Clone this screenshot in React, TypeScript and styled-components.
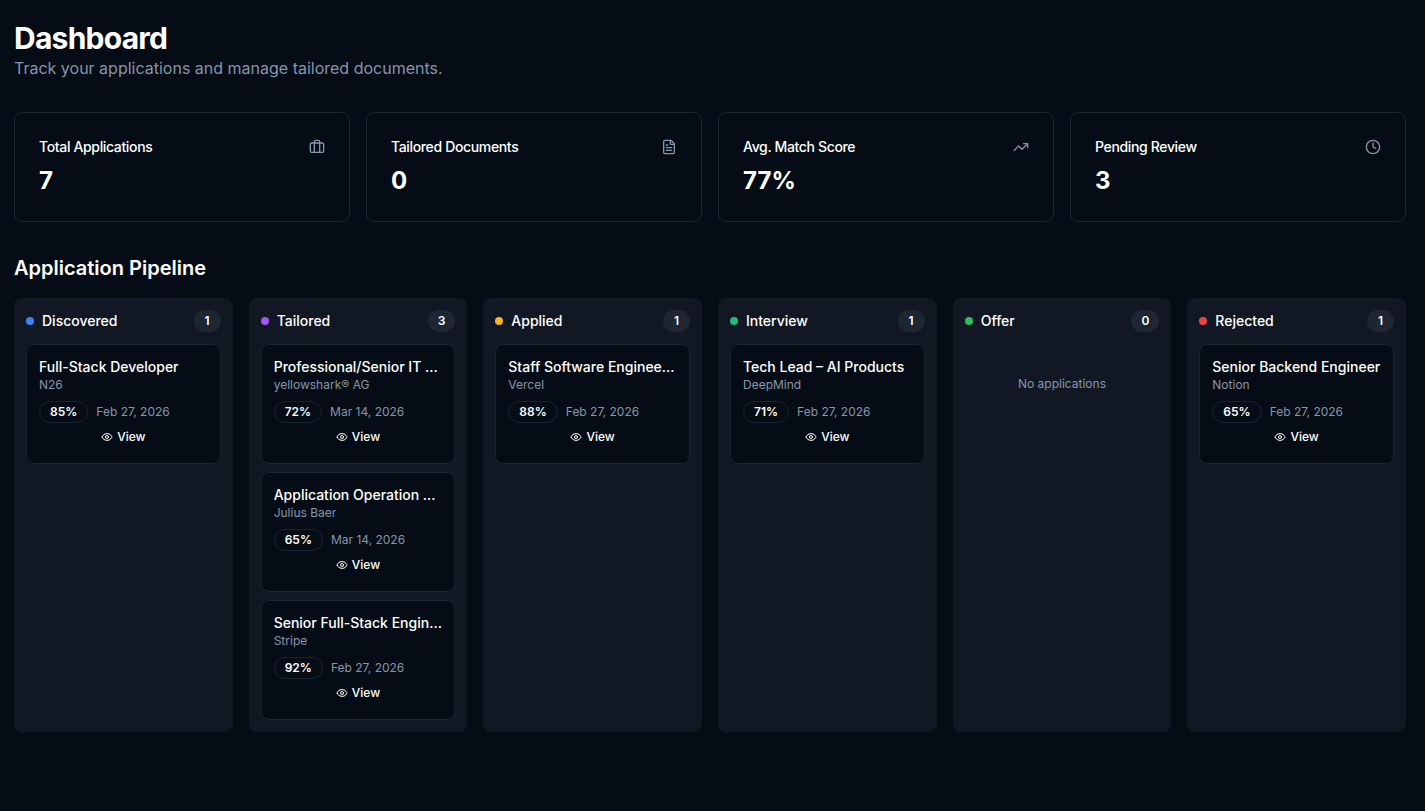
import React from "react";
import styled, { createGlobalStyle } from "styled-components";
import { Briefcase, FileText, TrendingUp, Clock, Eye } from "lucide-react";

const Global = createGlobalStyle`
  html, body { margin: 0; padding: 0; background: #050c15; }
  body { font-family: Inter, "Liberation Sans", sans-serif; color: #f8fafc; -webkit-font-smoothing: antialiased; }
  * { box-sizing: border-box; }
`;

const Page = styled.div`
  height: 811px;
  overflow: hidden;
  padding: 20px 19px 0 14px;
  background: #050c15;
`;
const Title = styled.h1`
  margin: 0;
  font-size: 30px;
  line-height: 36px;
  font-weight: 700;
  letter-spacing: -0.75px;
  color: #ffffff;
`;
const Subtitle = styled.p`
  margin: 0;
  font-size: 16px;
  line-height: 24px;
  color: #8795a9;
`;
const StatsGrid = styled.div`
  display: grid;
  grid-template-columns: repeat(4, minmax(0, 1fr));
  gap: 16px;
  margin-top: 32px;
`;
const StatCard = styled.div`
  height: 110px;
  border: 1px solid #1b2230;
  border-radius: 8px;
  padding: 24px;
`;
const StatTop = styled.div`
  display: flex;
  justify-content: space-between;
  align-items: center;
  height: 20px;
  margin-bottom: 8px;
  color: #8795a9;
`;
const StatLabel = styled.span`
  font-size: 14px;
  line-height: 20px;
  font-weight: 500;
  letter-spacing: -0.35px;
  color: #ffffff;
`;
const StatValue = styled.div`
  font-size: 24px;
  line-height: 32px;
  font-weight: 700;
  color: #ffffff;
`;
const SectionTitle = styled.h2`
  margin: 32px 0 16px;
  font-size: 20px;
  line-height: 28px;
  font-weight: 600;
  color: #ffffff;
`;
const Board = styled.div`
  display: grid;
  grid-template-columns: repeat(6, minmax(0, 1fr));
  gap: 16px;
`;
const Column = styled.div`
  height: 434px;
  min-width: 0;
  background: #111823;
  border-radius: 8px;
  padding: 12px;
`;
const ColumnHeader = styled.div`
  display: flex;
  align-items: center;
  height: 22px;
  margin-bottom: 12px;
`;
const Dot = styled.span<{ $color: string }>`
  width: 8px;
  height: 8px;
  border-radius: 50%;
  background: ${(p) => p.$color};
  margin-right: 8px;
`;
const ColumnName = styled.span`
  flex: 1;
  font-size: 14px;
  line-height: 20px;
  font-weight: 500;
  color: #ffffff;
`;
const Count = styled.span`
  min-width: 27px;
  height: 22px;
  padding: 0 10px;
  border-radius: 11px;
  background: #1e2533;
  font-size: 12px;
  line-height: 22px;
  font-weight: 600;
  text-align: center;
  color: #ffffff;
`;
const CardList = styled.div`
  display: flex;
  flex-direction: column;
  gap: 8px;
`;
const Card = styled.div`
  height: 120px;
  min-width: 0;
  background: #050c15;
  border: 1px solid #1b2230;
  border-radius: 8px;
  padding: 12px;
`;
const CardTitle = styled.div`
  font-size: 14px;
  line-height: 20px;
  font-weight: 500;
  color: #ffffff;
  white-space: nowrap;
  overflow: hidden;
  text-overflow: ellipsis;
`;
const Company = styled.div`
  font-size: 12px;
  line-height: 16px;
  color: #8795a9;
`;
const Meta = styled.div`
  display: flex;
  align-items: center;
  gap: 8px;
  margin-top: 8px;
`;
const Score = styled.span`
  height: 22px;
  padding: 0 10px;
  border: 1px solid #1b2230;
  border-radius: 11px;
  font-size: 12px;
  line-height: 20px;
  font-weight: 600;
  color: #ffffff;
`;
const DateText = styled.span`
  font-size: 12px;
  line-height: 16px;
  color: #8795a9;
`;
const ViewButton = styled.button`
  display: flex;
  align-items: center;
  justify-content: center;
  gap: 4px;
  width: 100%;
  height: 16px;
  margin-top: 6px;
  padding: 0;
  border: 0;
  background: none;
  font-family: inherit;
  font-size: 12px;
  line-height: 16px;
  font-weight: 500;
  color: #ffffff;
`;
const Empty = styled.div`
  margin-top: 32px;
  padding-top: 12px;
  text-align: center;
  font-size: 12px;
  line-height: 16px;
  color: #8795a9;
`;

type Application = { title: string; company: string; score: number; date: string };
const stats = [
  { label: "Total Applications", value: "7", Icon: Briefcase },
  { label: "Tailored Documents", value: "0", Icon: FileText },
  { label: "Avg. Match Score", value: "77%", Icon: TrendingUp },
  { label: "Pending Review", value: "3", Icon: Clock },
];
const columns: { name: string; color: string; items: Application[] }[] = [
  { name: "Discovered", color: "#3b82f6", items: [{ title: "Full-Stack Developer", company: "N26", score: 85, date: "Feb 27, 2026" }] },
  {
    name: "Tailored",
    color: "#a855f7",
    items: [
      { title: "Professional/Senior IT Consultant", company: "yellowshark® AG", score: 72, date: "Mar 14, 2026" },
      { title: "Application Operation Engineer", company: "Julius Baer", score: 65, date: "Mar 14, 2026" },
      { title: "Senior Full-Stack Engineer", company: "Stripe", score: 92, date: "Feb 27, 2026" },
    ],
  },
  { name: "Applied", color: "#f5b32a", items: [{ title: "Staff Software Engineer, Platform", company: "Vercel", score: 88, date: "Feb 27, 2026" }] },
  { name: "Interview", color: "#21b97f", items: [{ title: "Tech Lead – AI Products", company: "DeepMind", score: 71, date: "Feb 27, 2026" }] },
  { name: "Offer", color: "#2fbf5b", items: [] },
  { name: "Rejected", color: "#ef4444", items: [{ title: "Senior Backend Engineer", company: "Notion", score: 65, date: "Feb 27, 2026" }] },
];

export default function App() {
  return (
    <Page>
      <Global />
      <Title>Dashboard</Title>
      <Subtitle>Track your applications and manage tailored documents.</Subtitle>
      <StatsGrid>
        {stats.map(({ label, value, Icon }) => (
          <StatCard key={label}>
            <StatTop>
              <StatLabel>{label}</StatLabel>
              <Icon size={16} />
            </StatTop>
            <StatValue>{value}</StatValue>
          </StatCard>
        ))}
      </StatsGrid>
      <SectionTitle>Application Pipeline</SectionTitle>
      <Board>
        {columns.map((c) => (
          <Column key={c.name}>
            <ColumnHeader>
              <Dot $color={c.color} />
              <ColumnName>{c.name}</ColumnName>
              <Count>{c.items.length}</Count>
            </ColumnHeader>
            {c.items.length === 0 ? (
              <Empty>No applications</Empty>
            ) : (
              <CardList>
                {c.items.map((a) => (
                  <Card key={a.title}>
                    <CardTitle>{a.title}</CardTitle>
                    <Company>{a.company}</Company>
                    <Meta>
                      <Score>{a.score}%</Score>
                      <DateText>{a.date}</DateText>
                    </Meta>
                    <ViewButton>
                      <Eye size={12} />
                      View
                    </ViewButton>
                  </Card>
                ))}
              </CardList>
            )}
          </Column>
        ))}
      </Board>
    </Page>
  );
}
